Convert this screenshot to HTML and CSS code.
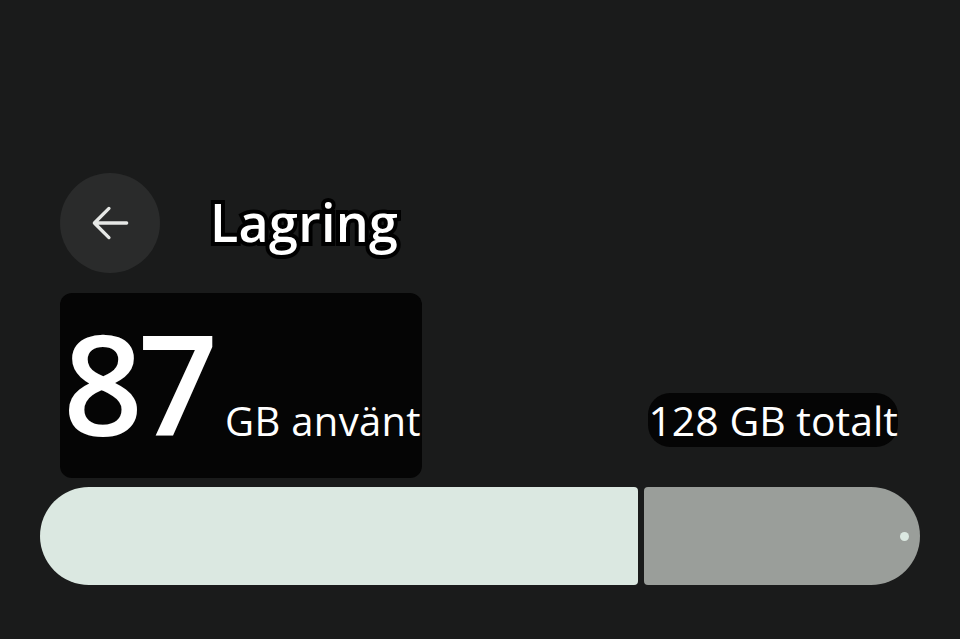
FILE: index.html
```html
<!DOCTYPE html>
<html lang="sv">
<head>
  <meta charset="UTF-8" />
  <meta name="viewport" content="width=device-width, initial-scale=1.0"/>
  <title>Lagring</title>
  <link rel="stylesheet" href="styles.css">
</head>
<body>
  <div class="screen">
    <!-- Top bar -->
    <div class="top-bar">
      <button class="back-btn" aria-label="Tillbaka">
        <svg width="50" height="50" viewBox="0 0 24 24">
          <path d="M20 12H4.5M11.5 5l-7 7 7 7" fill="none" stroke="#e6e8e6" stroke-width="1.6" stroke-linecap="round" stroke-linejoin="round"/>
        </svg>
      </button>
      <h1 class="title">Lagring</h1>
    </div>

    <!-- Usage summary -->
    <div class="summary">
      <div class="used-box">
        <span class="used-num">87</span>
        <span class="used-label">GB använt</span>
      </div>
      <span class="total">128 GB totalt</span>
    </div>

    <!-- Usage bar -->
    <div class="bar">
      <div class="bar-used" style="width: 68%"></div>
      <div class="bar-free"><span class="bar-dot"></span></div>
    </div>
  </div>
</body>
</html>
```

FILE: styles.css
```css
body {
  margin: 0;
  background-color: #1a1b1b;
  color: #fff;
  font-family: "Open Sans", Roboto, sans-serif;
}

.screen {
  padding: 173px 40px 0 40px;
}

.top-bar {
  display: flex;
  align-items: center;
  margin-left: 20px;
  height: 100px;
}

.back-btn {
  width: 100px;
  height: 100px;
  border-radius: 50%;
  border: none;
  background-color: #2a2b2b;
  display: flex;
  align-items: center;
  justify-content: center;
  padding: 0;
  cursor: pointer;
}

.title {
  margin: 0 0 4px 50px;
  font-size: 52px;
  font-weight: 600;
  -webkit-text-stroke: 8px #000;
  paint-order: stroke fill;
  letter-spacing: 0.3px;
}

.summary {
  display: flex;
  justify-content: space-between;
  align-items: flex-end;
  margin: 20px 22px 0 20px;
}

.used-box {
  background-color: #050505;
  border-radius: 12px;
  width: 362px;
  height: 185px;
  display: flex;
  align-items: baseline;
  box-sizing: border-box;
  padding: 19px 0 0 3px;
  line-height: 1;
  white-space: nowrap;
}

.used-num {
  font-size: 140px;
  font-weight: 600;
  letter-spacing: -5px;
}

.used-label {
  font-size: 40px;
  margin-left: 12px;
  letter-spacing: 0.3px;
}

.total {
  font-size: 41px;
  background-color: #050505;
  border-radius: 22px;
  padding: 4px 0 4px 0;
  margin-bottom: 31px;
  line-height: 46px;
  white-space: nowrap;
}

.bar {
  display: flex;
  gap: 6px;
  height: 98px;
  margin-top: 9px;
}

.bar-used {
  background-color: #dbe8e1;
  border-radius: 49px 4px 4px 49px;
}

.bar-free {
  flex: 1;
  background-color: #9a9e9a;
  border-radius: 4px 49px 49px 4px;
  display: flex;
  align-items: center;
  justify-content: flex-end;
  padding-right: 11px;
}

.bar-dot {
  width: 9px;
  height: 9px;
  border-radius: 50%;
  background-color: #dbe8e1;
}
```
